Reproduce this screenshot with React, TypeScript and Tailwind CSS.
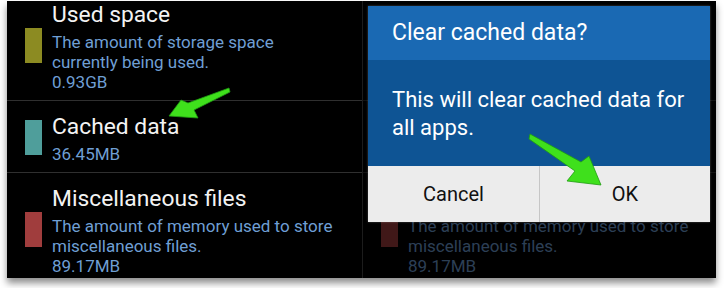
const rows = [
  {
    title: "Used space",
    color: "bg-[#8c8b22]",
    lines: ["The amount of storage space", "currently being used.", "0.93GB"],
  },
  {
    title: "Cached data",
    color: "bg-[#4f9e9b]",
    lines: ["36.45MB"],
  },
  {
    title: "Miscellaneous files",
    color: "bg-[#a03d3d]",
    lines: ["The amount of memory used to store", "miscellaneous files.", "89.17MB"],
  },
];

function StorageList() {
  return (
    <div className="mt-[-12px]">
      {rows.map((row, i) => (
        <div
          key={row.title}
          className={`flex items-center gap-[10px] pl-[18px] pt-[9px] pb-[8px] ${
            i < rows.length - 1 ? "border-b border-[#2f2f2f]" : ""
          }`}
        >
          <div className={`w-[17px] h-[35px] shrink-0 ${row.color}`} />
          <div>
            <div className="text-[22.8px] leading-[34px] text-[#f3f3f3]">{row.title}</div>
            {row.lines.map((line) => (
              <div key={line} className="text-[17px] leading-[20px] text-[#6f9fd4]">
                {line}
              </div>
            ))}
          </div>
        </div>
      ))}
    </div>
  );
}

export default function App() {
  return (
    <div className="relative w-[725px] h-[288px] bg-white overflow-hidden font-['Roboto',sans-serif]">
      <div className="ml-[7px] mt-[1px] w-[709px] h-[277px] bg-black flex overflow-hidden shadow-[0_5px_7px_rgba(0,0,0,0.45)]">
        {/* left screen */}
        <div className="w-[356px] h-full overflow-hidden border-r border-[#1c1c1c]">
          <StorageList />
        </div>

        {/* right screen with dialog */}
        <div className="relative flex-1 h-full overflow-hidden">
          <StorageList />
          <div className="absolute inset-0 bg-black/60" />

          <div className="absolute left-[5px] top-[5px] w-[342px] shadow-[0_0_2px_rgba(255,255,255,0.3)]">
            <div className="h-[54px] bg-[#1a69b3] px-[24px] flex items-center text-[23px] text-white">
              Clear cached data?
            </div>
            <div className="h-[106px] bg-[#0e5494] px-[24px] pt-[26px] text-[22px] leading-[28px] text-white">
              This will clear cached data for all apps.
            </div>
            <div className="h-[56px] bg-[#ececec] grid grid-cols-2 text-[20px] text-[#111]">
              <div className="flex items-center justify-center">Cancel</div>
              <div className="flex items-center justify-center border-l border-[#c6c6c6]">OK</div>
            </div>
          </div>
        </div>
      </div>

      {/* green pointer arrows */}
      <svg className="absolute inset-0 pointer-events-none" width="725" height="288" viewBox="0 0 725 288">
        <polygon
          points="229,88 230,92 194,110 198,118 169,116 181,100 188,103"
          fill="#3fe01c"
          stroke="#1f9c12"
          strokeWidth="0.8"
          strokeLinejoin="round"
        />
        <polygon
          points="530,134 581,162 589,156 601,185 567,181 575,171 529,139"
          fill="#3fe01c"
          stroke="#1f9c12"
          strokeWidth="0.8"
          strokeLinejoin="round"
        />
      </svg>
    </div>
  );
}
